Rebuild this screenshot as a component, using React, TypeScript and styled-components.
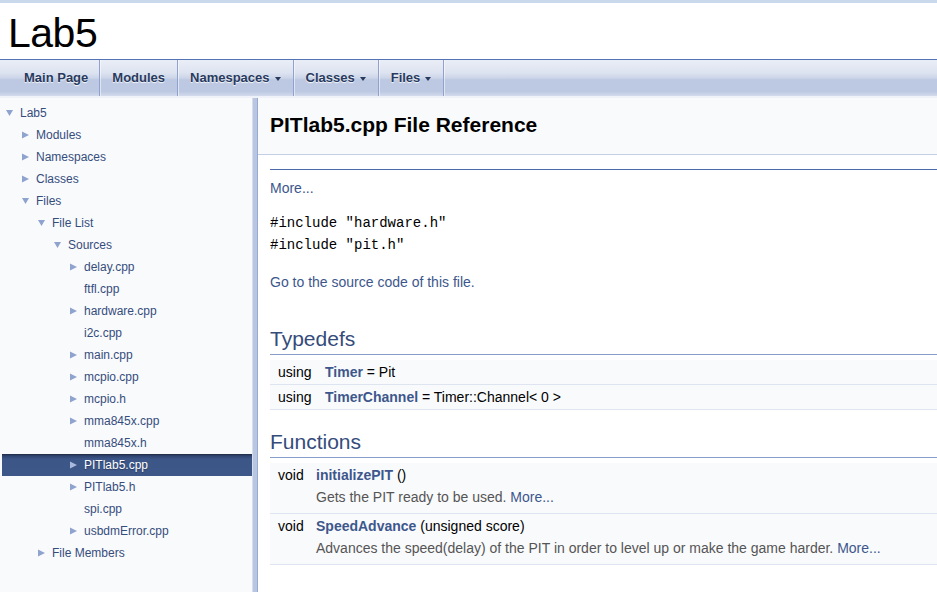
import React from "react";
import styled, { createGlobalStyle } from "styled-components";

const Global = createGlobalStyle`
  html, body { margin: 0; padding: 0; background: #ffffff; }
  body { font-family: "Liberation Sans", Arial, sans-serif; overflow: hidden; }
  * { box-sizing: border-box; }
`;

const Page = styled.div`
  display: flex;
  flex-direction: column;
  height: 100vh;
  width: 100%;
`;

const TopStripe = styled.div`
  height: 3px;
  background: #c9d8ea;
`;

const TitleArea = styled.div`
  height: 56px;
  display: flex;
  align-items: center;
  padding-left: 8px;
`;

const ProjectName = styled.div`
  font-family: "Liberation Sans", Arial, sans-serif;
  font-size: 41px;
  color: #000;
  letter-spacing: -0.5px;
  line-height: 1;
  margin-top: 4px;
`;

const MenuBar = styled.nav`
  height: 37px;
  border-top: 1px solid #5373b4;
  background: linear-gradient(
    #eaeef7 0%,
    #dde3f0 35%,
    #ccd5e9 50%,
    #bdc9e2 55%,
    #bdc9e2 88%,
    #d3dbec 100%
  );
  display: flex;
  align-items: stretch;
  padding-left: 12px;
`;

const Tab = styled.div<{ $first?: boolean }>`
  display: flex;
  align-items: center;
  padding: 0 12px 1px 12px;
  font-family: "Liberation Sans", Arial, sans-serif;
  font-size: 13px;
  font-weight: bold;
  color: #283a5d;
  text-shadow: 0 1px 1px rgba(255, 255, 255, 0.9);
  border-right: 1px solid #8fa1cc;
  box-shadow: 1px 0 0 rgba(255, 255, 255, 0.5);
  ${(p) => (p.$first ? "margin-left: -12px; padding-left: 24px; padding-right: 11px;" : "")}
`;

const Caret = styled.span`
  display: inline-block;
  width: 0;
  height: 0;
  margin-left: 5px;
  margin-top: 2px;
  border-left: 3.5px solid transparent;
  border-right: 3.5px solid transparent;
  border-top: 4px solid #283a5d;
`;

const UnderStrip = styled.div`
  height: 2px;
  background: #eff2f8;
`;

const Body = styled.div`
  flex: 1;
  display: flex;
  min-height: 0;
`;

const SideNav = styled.aside`
  width: 252px;
  flex: none;
  background: #f9fafc;
  padding-top: 4px;
`;

const Row = styled.div<{ $level: number; $selected?: boolean }>`
  height: 22px;
  margin-left: 2px;
  display: flex;
  align-items: center;
  padding-left: ${(p) => 2 + p.$level * 16}px;
  font-family: "Liberation Sans", Arial, sans-serif;
  font-size: 12px;
  color: ${(p) => (p.$selected ? "#ffffff" : "#364d7c")};
  background: ${(p) =>
    p.$selected
      ? "linear-gradient(#1f2b44 0px, #2f4470 2px, #3c5688 5px, #3e5789 100%)"
      : "transparent"};
  text-shadow: ${(p) => (p.$selected ? "0 1px 1px rgba(0,0,0,0.3)" : "none")};
`;

const ArrowBox = styled.span`
  width: 16px;
  flex: none;
  display: flex;
  align-items: center;
`;

const Splitter = styled.div`
  width: 6px;
  flex: none;
  border-left: 1px solid #d6ddec;
  border-right: 1px solid #98aad3;
  background: #b9c6e2;
`;

const Main = styled.main`
  flex: 1;
  min-width: 0;
  display: flex;
  flex-direction: column;
`;

const Header = styled.div`
  height: 57px;
  background: #f9fafc;
  border-bottom: 1px solid #c4cfe5;
  display: flex;
  align-items: center;
  padding-left: 12px;
  padding-bottom: 2px;
`;

const HeaderTitle = styled.div`
  font-family: "Liberation Sans", Arial, sans-serif;
  font-size: 21px;
  font-weight: bold;
  color: #000;
`;

const Contents = styled.div`
  padding-left: 12px;
`;

const Rule = styled.div`
  margin-top: 14px;
  border-top: 1px solid #4a6aaa;
`;

const Para = styled.div<{ $mt: number }>`
  margin-top: ${(p) => p.$mt}px;
  font-size: 14px;
  line-height: 22px;
  color: #000;
`;

const Link = styled.span`
  color: #3d578c;
`;

const Code = styled.div`
  font-family: "Liberation Mono", "Courier New", monospace;
  font-size: 14px;
  line-height: 22px;
  color: #000;
`;

const GroupHeader = styled.h2<{ $mt: number }>`
  margin: ${(p) => p.$mt}px 0 0 0;
  font-family: "Liberation Sans", Arial, sans-serif;
  font-size: 21px;
  font-weight: normal;
  line-height: 26px;
  color: #354c7b;
  padding-bottom: 2px;
  border-bottom: 1px solid #879ecb;
`;

const MemberList = styled.div`
  margin-top: 5px;
`;

const MemberRow = styled.div<{ $col: number }>`
  display: grid;
  grid-template-columns: ${(p) => p.$col}px 1fr;
  background: #f9fafc;
  border-bottom: 1px solid #dee4f0;
  padding: 1px 0 1px 8px;
  font-size: 14px;
  line-height: 22px;
  color: #000;
`;

const FuncRow = styled(MemberRow)`
  padding-bottom: 5px;
`;

const MemName = styled.b`
  color: #3d578c;
`;

const Desc = styled.div`
  grid-column: 2;
  color: #555555;
`;

type NavItem = { label: string; level: number; arrow: "down" | "right" | null; selected?: boolean };

const navItems: NavItem[] = [
  { label: "Lab5", level: 0, arrow: "down" },
  { label: "Modules", level: 1, arrow: "right" },
  { label: "Namespaces", level: 1, arrow: "right" },
  { label: "Classes", level: 1, arrow: "right" },
  { label: "Files", level: 1, arrow: "down" },
  { label: "File List", level: 2, arrow: "down" },
  { label: "Sources", level: 3, arrow: "down" },
  { label: "delay.cpp", level: 4, arrow: "right" },
  { label: "ftfl.cpp", level: 4, arrow: null },
  { label: "hardware.cpp", level: 4, arrow: "right" },
  { label: "i2c.cpp", level: 4, arrow: null },
  { label: "main.cpp", level: 4, arrow: "right" },
  { label: "mcpio.cpp", level: 4, arrow: "right" },
  { label: "mcpio.h", level: 4, arrow: "right" },
  { label: "mma845x.cpp", level: 4, arrow: "right" },
  { label: "mma845x.h", level: 4, arrow: null },
  { label: "PITlab5.cpp", level: 4, arrow: "right", selected: true },
  { label: "PITlab5.h", level: 4, arrow: "right" },
  { label: "spi.cpp", level: 4, arrow: null },
  { label: "usbdmError.cpp", level: 4, arrow: "right" },
  { label: "File Members", level: 2, arrow: "right" },
];

function Arrow({ dir, light }: { dir: "down" | "right"; light?: boolean }) {
  const fill = light ? "#a9b9dc" : "#8fa3cf";
  return (
    <svg width="9" height="8" viewBox="0 0 9 8" style={{ marginLeft: 2 }}>
      {dir === "right" ? (
        <polygon points="0,0.5 7,4 0,7.5" fill={fill} />
      ) : (
        <polygon points="0,1 7,1 3.5,7" fill={fill} />
      )}
    </svg>
  );
}

const tabs = [
  { label: "Main Page", caret: false },
  { label: "Modules", caret: false },
  { label: "Namespaces", caret: true },
  { label: "Classes", caret: true },
  { label: "Files", caret: true },
];

export default function App() {
  return (
    <Page>
      <Global />
      <TopStripe />
      <TitleArea>
        <ProjectName>Lab5</ProjectName>
      </TitleArea>
      <MenuBar>
        {tabs.map((t, i) => (
          <Tab key={t.label} $first={i === 0}>
            {t.label}
            {t.caret && <Caret />}
          </Tab>
        ))}
      </MenuBar>
      <UnderStrip />
      <Body>
        <SideNav>
          {navItems.map((n) => (
            <Row key={n.label} $level={n.level} $selected={n.selected}>
              <ArrowBox>{n.arrow && <Arrow dir={n.arrow} light={n.selected} />}</ArrowBox>
              {n.label}
            </Row>
          ))}
        </SideNav>
        <Splitter />
        <Main>
          <Header>
            <HeaderTitle>PITlab5.cpp File Reference</HeaderTitle>
          </Header>
          <Contents>
            <Rule />
            <Para $mt={7}>
              <Link>More...</Link>
            </Para>
            <Para $mt={13}>
              <Code>#include "hardware.h"</Code>
              <Code>#include "pit.h"</Code>
            </Para>
            <Para $mt={15}>
              <Link>Go to the source code of this file.</Link>
            </Para>
            <GroupHeader $mt={33}>Typedefs</GroupHeader>
            <MemberList>
              <MemberRow $col={47}>
                <span>using</span>
                <span>
                  <MemName>Timer</MemName> = Pit
                </span>
              </MemberRow>
              <MemberRow $col={47}>
                <span>using</span>
                <span>
                  <MemName>TimerChannel</MemName> = Timer::Channel&lt; 0 &gt;
                </span>
              </MemberRow>
            </MemberList>
            <GroupHeader $mt={19}>Functions</GroupHeader>
            <MemberList>
              <FuncRow $col={38}>
                <span>void</span>
                <span>
                  <MemName>initializePIT</MemName> ()
                </span>
                <Desc>
                  Gets the PIT ready to be used. <Link>More...</Link>
                </Desc>
              </FuncRow>
              <FuncRow $col={38}>
                <span>void</span>
                <span>
                  <MemName>SpeedAdvance</MemName> (unsigned score)
                </span>
                <Desc>
                  Advances the speed(delay) of the PIT in order to level up or make the game harder.{" "}
                  <Link>More...</Link>
                </Desc>
              </FuncRow>
            </MemberList>
          </Contents>
        </Main>
      </Body>
    </Page>
  );
}
